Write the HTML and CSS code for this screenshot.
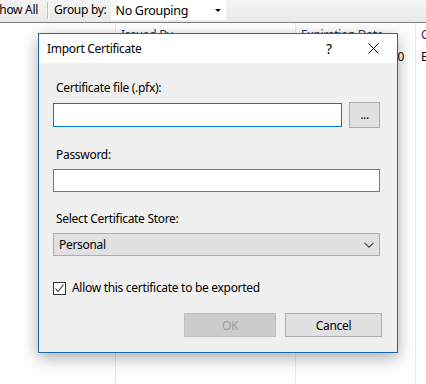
FILE: index.html
```html
<!DOCTYPE html>
<html lang="en">
<head>
    <meta charset="UTF-8">
    <title>Import Certificate</title>
    <link rel="stylesheet" href="styles.css">
</head>
<body>

<div class="app">
    <!-- Toolbar -->
    <div class="toolbar">
        <span class="tb-text tb-show">Show All</span>
        <span class="tb-sep"></span>
        <span class="tb-text">Group by:</span>
        <div class="tb-combo">
            <span>No Grouping</span>
            <span class="tb-arrow"></span>
        </div>
    </div>

    <!-- Certificate list behind the dialog -->
    <div class="list">
        <div class="col col-name">
            <div class="cell head"></div>
        </div>
        <div class="col col-issuer">
            <div class="cell head">Issued By</div>
            <div class="cell">Contoso Root CA</div>
        </div>
        <div class="col col-exp">
            <div class="cell head">Expiration Date</div>
            <div class="cell cell-date">5/5/2020</div>
        </div>
        <div class="col col-store">
            <div class="cell head">Certificate Store</div>
            <div class="cell">Enabled</div>
        </div>
    </div>
</div>

<!-- Import Certificate dialog -->
<div class="dlg">
    <div class="dlg-title">
        <span class="dlg-caption">Import Certificate</span>
        <span class="dlg-help">?</span>
        <span class="dlg-close">
            <svg width="11" height="11" viewBox="0 0 11 11">
                <path d="M0.5 0.5 L10.5 10.5 M10.5 0.5 L0.5 10.5" stroke="#000" stroke-width="1" fill="none"/>
            </svg>
        </span>
    </div>

    <div class="dlg-body">
        <div class="field">
            <div class="field-label">Certificate file (.pfx):</div>
            <div class="file-row">
                <input type="text" class="txt txt-focus">
                <button class="btn btn-browse">...</button>
            </div>
        </div>

        <div class="field field-gap">
            <div class="field-label">Password:</div>
            <input type="password" class="txt txt-pass">
        </div>

        <div class="field field-gap">
            <div class="field-label">Select Certificate Store:</div>
            <div class="combo">
                <span>Personal</span>
                <svg width="10" height="6" viewBox="0 0 10 6">
                    <path d="M0.5 0.8 L5 5.2 L9.5 0.8" stroke="#404040" stroke-width="1.1" fill="none"/>
                </svg>
            </div>
        </div>

        <label class="check-row">
            <span class="checkbox">
                <svg width="11" height="11" viewBox="0 0 11 11">
                    <path d="M1.5 5.5 L4 8.5 L9.5 1.5" stroke="#333" stroke-width="1.1" fill="none"/>
                </svg>
            </span>
            Allow this certificate to be exported
        </label>

        <div class="btn-row">
            <button class="btn btn-ok" disabled>OK</button>
            <button class="btn btn-cancel">Cancel</button>
        </div>
    </div>
</div>

</body>
</html>
```

FILE: styles.css
```css
/* Reset styles */
* {
    margin: 0;
    padding: 0;
    box-sizing: border-box;
}

body {
    width: 426px;
    height: 384px;
    overflow: hidden;
    background-color: #fff;
    color: #000;
    font-family: 'Noto Sans', sans-serif;
    font-size: 12px;
    letter-spacing: -0.3px;
    position: relative;
}

/* Toolbar */
.toolbar {
    display: flex;
    align-items: center;
    height: 23px;
    padding-bottom: 2px;
    background: linear-gradient(#f4f4f4, #e9e9e9);
    border-bottom: 1px solid #7f7f7f;
    overflow: hidden;
    white-space: nowrap;
}

.tb-text {
    line-height: 16px;
}

.tb-show {
    margin-left: -7px;
}

.tb-sep {
    width: 2px;
    height: 17px;
    margin: 0 5px 0 9px;
    border-left: 1px solid #c2c2c2;
    border-right: 1px solid #fafafa;
}

.tb-combo {
    display: flex;
    align-items: center;
    justify-content: space-between;
    width: 115px;
    height: 20px;
    margin-left: 5px;
    padding: 0 4px 0 4px;
    background-color: #fff;
    font-size: 12.5px;
}

.tb-arrow {
    width: 0;
    height: 0;
    margin-right: 1px;
    border-left: 3px solid transparent;
    border-right: 3px solid transparent;
    border-top: 3px solid #000;
}

/* List behind */
.list {
    display: flex;
    height: 361px;
}

.col {
    border-right: 1px solid #e6ebf1;
    white-space: nowrap;
    overflow: hidden;
}

.col-name { width: 116px; }
.col-issuer { width: 180px; }
.col-exp { width: 120px; }
.col-store { flex: 1; border-right: none; }

.cell {
    height: 22px;
    line-height: 22px;
    padding-left: 5px;
}

.cell.head {
    height: 23px;
    line-height: 23px;
    color: #1e395b;
}

.cell-date {
    text-align: right;
    padding-right: 11px;
}

/* Dialog */
.dlg {
    position: absolute;
    left: 38px;
    top: 33px;
    width: 360px;
    height: 320px;
    background-color: #f0f0f0;
    border: 1px solid #1c67ad;
    box-shadow: 0 5px 16px rgba(0, 0, 0, 0.33);
}

.dlg-title {
    display: flex;
    align-items: center;
    height: 29px;
    background-color: #fff;
    padding-left: 8px;
}

.dlg-caption {
    flex: 1;
}

.dlg-help {
    width: 20px;
    font-size: 14px;
    margin-right: 22px;
}

.dlg-close {
    display: flex;
    width: 11px;
    margin-right: 18px;
}

.dlg-body {
    padding: 17px 17px 0 14px;
}

.field-label {
    line-height: 16px;
    padding-left: 3px;
    margin-bottom: 6px;
}

.field-gap {
    margin-top: 19px;
}

.file-row {
    display: flex;
    align-items: center;
    gap: 7px;
}

.txt {
    display: block;
    height: 24px;
    border: 1px solid #7a7a7a;
    background-color: #fff;
    outline: none;
    font-family: inherit;
    font-size: 12px;
}

.txt-focus {
    width: 290px;
    border-color: #0078d7;
}

.txt-pass {
    width: 327px;
    height: 23px;
}

.combo {
    display: flex;
    align-items: center;
    justify-content: space-between;
    width: 327px;
    height: 23px;
    padding: 0 5px 0 5px;
    background-color: #e1e1e1;
    border: 1px solid #adadad;
}

.check-row {
    display: flex;
    align-items: center;
    gap: 6px;
    margin-top: 24px;
    line-height: 16px;
}

.checkbox {
    display: flex;
    align-items: center;
    justify-content: center;
    width: 13px;
    height: 13px;
    border: 1px solid #333;
    background-color: #fff;
}

/* Buttons */
.btn {
    font-family: inherit;
    font-size: 12px;
    letter-spacing: -0.3px;
    color: #000;
    background-color: #e1e1e1;
    border: 1px solid #adadad;
}

.btn-browse {
    width: 31px;
    height: 26px;
    line-height: 18px;
}

.btn-row {
    display: flex;
    justify-content: flex-end;
    gap: 9px;
    margin-top: 17px;
    margin-right: -2px;
}

.btn-ok {
    width: 92px;
    height: 24px;
    background-color: #cccccc;
    border-color: #bfbfbf;
    color: #a0a0a0;
}

.btn-cancel {
    width: 97px;
    height: 24px;
}
```
